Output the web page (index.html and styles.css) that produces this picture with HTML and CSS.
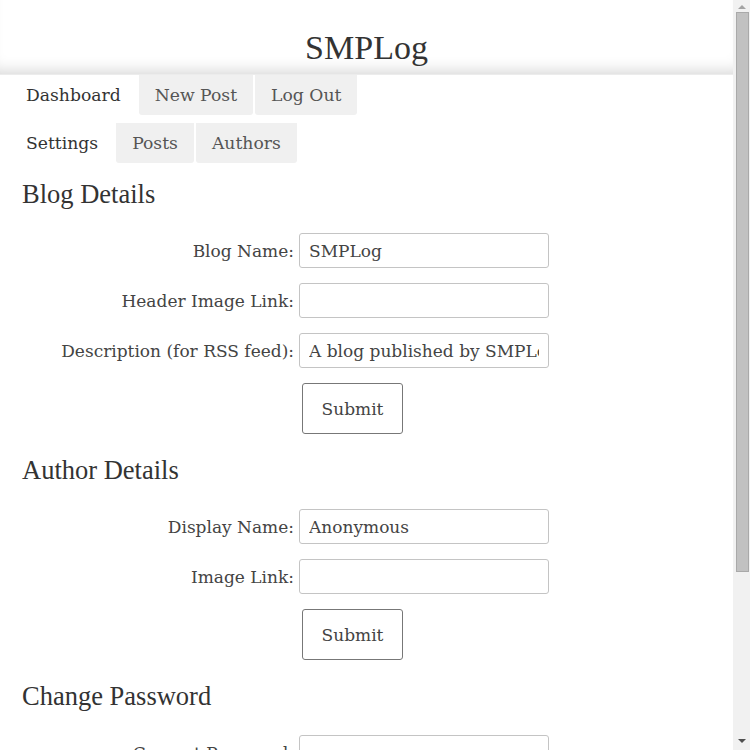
FILE: index.html
```html
<!DOCTYPE html>
<html>
<head>
<meta charset="utf-8">
<title>SMPLog</title>
<link rel="stylesheet" href="styles.css">
</head>
<body>
<div class="page">
  <header class="site-header">
    <h1 class="site-title">SMPLog</h1>
  </header>
  <nav class="tabs">
    <ul class="tab-row">
      <li class="tab active">Dashboard</li>
      <li class="tab">New Post</li>
      <li class="tab">Log Out</li>
    </ul>
    <ul class="tab-row">
      <li class="tab active">Settings</li>
      <li class="tab">Posts</li>
      <li class="tab">Authors</li>
    </ul>
  </nav>
  <main class="content">
    <section class="panel">
      <h2 class="panel-title">Blog Details</h2>
      <form class="form-grid">
        <label class="field-label">Blog Name:</label>
        <input class="field-input" type="text" value="SMPLog">
        <label class="field-label">Header Image Link:</label>
        <input class="field-input" type="text" value="">
        <label class="field-label">Description (for RSS feed):</label>
        <input class="field-input" type="text" value="A blog published by SMPLog">
        <button class="submit-btn" type="button">Submit</button>
      </form>
    </section>
    <section class="panel">
      <h2 class="panel-title">Author Details</h2>
      <form class="form-grid">
        <label class="field-label">Display Name:</label>
        <input class="field-input" type="text" value="Anonymous">
        <label class="field-label">Image Link:</label>
        <input class="field-input" type="text" value="">
        <button class="submit-btn" type="button">Submit</button>
      </form>
    </section>
    <section class="panel">
      <h2 class="panel-title">Change Password</h2>
      <form class="form-grid">
        <label class="field-label">Current Password:</label>
        <input class="field-input" type="password" value="">
        <label class="field-label">New Password:</label>
        <input class="field-input" type="password" value="">
        <label class="field-label">Confirm Password:</label>
        <input class="field-input" type="password" value="">
        <button class="submit-btn" type="button">Submit</button>
      </form>
    </section>
  </main>
</div>
<div class="scrollbar" aria-hidden="true">
  <span class="arrow arrow-up"></span>
  <span class="thumb"></span>
  <span class="arrow arrow-down"></span>
</div>
</body>
</html>
```
FILE: styles.css
```css
html, body {
  margin: 0;
  padding: 0;
  background: #ffffff;
}
body {
  display: flex;
  height: 100vh;
  overflow: hidden;
  font-family: "DejaVu Serif", serif;
  font-size: 17px;
  color: #444444;
}
.page {
  flex: 1;
  min-width: 0;
  overflow: hidden;
}
.scrollbar {
  width: 17px;
  flex: none;
  background: #f1f1f1;
  display: flex;
  flex-direction: column;
  align-items: center;
  box-sizing: border-box;
  padding: 5px 0 7px;
}
.arrow {
  width: 0;
  height: 0;
  border-left: 4px solid transparent;
  border-right: 4px solid transparent;
  margin-left: 1px;
}
.arrow-up {
  border-bottom: 4px solid #a3a3a3;
}
.arrow-down {
  border-top: 4px solid #505050;
}
.thumb {
  width: 13px;
  height: 560px;
  box-sizing: border-box;
  margin: 3px 0 auto 1px;
  background: #c1c1c1;
  border: 1px solid #a9a9a9;
}
.site-header {
  height: 74px;
  box-shadow: inset 0 -14px 16px -12px rgba(0, 0, 0, 0.18);
  border-bottom: 1px solid #ececec;
  display: flex;
  align-items: flex-start;
  justify-content: center;
}
.site-title {
  margin: 28px 0 0;
  font-family: "Liberation Serif", serif;
  font-weight: normal;
  font-size: 34px;
  line-height: 40px;
  color: #333333;
}
.tabs {
  display: flex;
  flex-direction: column;
  gap: 8px;
  padding-left: 10px;
}
.tab-row {
  display: flex;
  gap: 2px;
  list-style: none;
  margin: 0;
  padding: 0;
}
.tab {
  height: 40px;
  line-height: 40px;
  padding: 0 16px;
  font-size: 17.2px;
  background: #f0f0f0;
  color: #555555;
  border-radius: 0 0 3px 3px;
}
.tab.active {
  background: #ffffff;
  color: #333333;
}
.content {
  padding: 0 22px 52px;
}
.panel {
  margin-top: 21px;
}
.panel:first-child {
  margin-top: 16px;
}
.panel-title {
  margin: 0 0 24px;
  font-family: "Liberation Serif", serif;
  font-weight: normal;
  font-size: 26.5px;
  line-height: 30px;
  color: #333333;
}
.form-grid {
  display: grid;
  grid-template-columns: 272px 250px;
  column-gap: 5px;
  row-gap: 15px;
  margin: 0;
}
.field-label {
  align-self: center;
  text-align: right;
  color: #444444;
  white-space: nowrap;
}
.field-input {
  box-sizing: border-box;
  width: 250px;
  height: 35px;
  margin: 0;
  padding: 0 9px;
  border: 1px solid #c4c4c4;
  border-radius: 3px;
  font-family: "DejaVu Serif", serif;
  font-size: 17px;
  color: #444444;
  background: #ffffff;
  outline: none;
}
.submit-btn {
  grid-column: 2;
  justify-self: start;
  box-sizing: border-box;
  width: 101px;
  height: 51px;
  margin-left: 3px;
  border: 1px solid #777777;
  border-radius: 3px;
  background: #ffffff;
  font-family: "DejaVu Serif", serif;
  font-size: 17px;
  color: #444444;
  padding: 0;
}
```
